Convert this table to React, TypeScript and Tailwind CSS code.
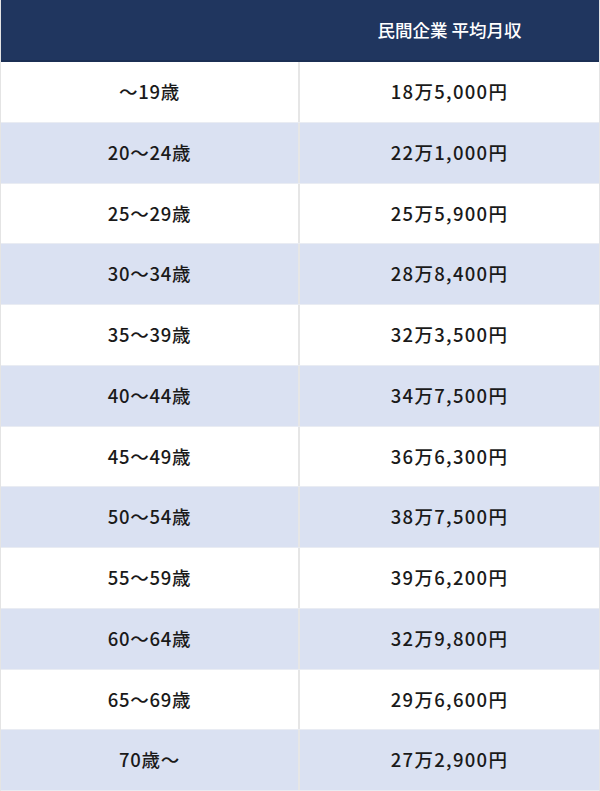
const rows: [string, string][] = [
  ['～19歳', '18万5,000円'],
  ['20～24歳', '22万1,000円'],
  ['25～29歳', '25万5,900円'],
  ['30～34歳', '28万8,400円'],
  ['35～39歳', '32万3,500円'],
  ['40～44歳', '34万7,500円'],
  ['45～49歳', '36万6,300円'],
  ['50～54歳', '38万7,500円'],
  ['55～59歳', '39万6,200円'],
  ['60～64歳', '32万9,800円'],
  ['65～69歳', '29万6,600円'],
  ['70歳～', '27万2,900円'],
]

export default function App() {
  return (
    <div
      className="w-[600px] h-[791px] overflow-hidden bg-white border-x border-[#e4e4e4] text-[#1a1a1a]"
      style={{ fontFamily: '"Noto Sans CJK JP", "Noto Sans", sans-serif' }}
    >
      <div className="grid grid-cols-2 h-[62px] bg-[#20365f] border-b-2 border-[#1b2f54] text-white">
        <div />
        <div className="flex items-center justify-center text-[17.5px] font-medium">
          民間企業 平均月収
        </div>
      </div>
      {rows.map(([age, pay], i) => (
        <div
          key={age}
          className={`grid grid-cols-2 h-[60.75px] border-b border-[#e9ecf3] ${
            i % 2 === 1 ? 'bg-[#dae1f2]' : 'bg-white'
          }`}
        >
          <div className="flex items-center justify-center border-r-2 border-[#e6e6e6] text-[18.5px] font-medium tracking-[0.04em]">
            {age}
          </div>
          <div className="flex items-center justify-center text-[18.5px] font-medium tracking-[0.07em]">
            {pay}
          </div>
        </div>
      ))}
    </div>
  )
}
